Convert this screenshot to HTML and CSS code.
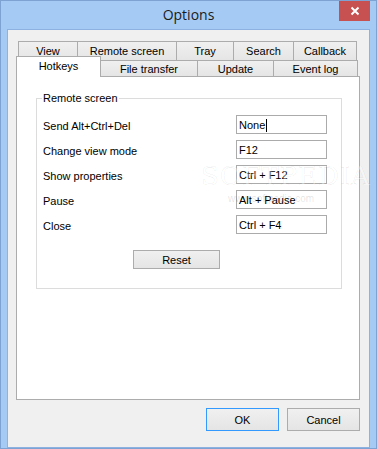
FILE: index.html
```html
<!DOCTYPE html>
<html lang="en">
  <head>
    <meta charset="UTF-8" />
    <title>Options</title>
    <link rel="stylesheet" href="styles.css">
  </head>

  <body>
    <div class="window">
      <div class="titlebar">
        <div class="title">Options</div>
        <div class="close">
          <svg width="10" height="10" viewBox="0 0 10 10">
            <path d="M1.5 1.5 L8.5 8.5 M8.5 1.5 L1.5 8.5" stroke="#fff" stroke-width="2" />
          </svg>
        </div>
      </div>

      <div class="client">
        <div class="tabs">
          <div class="tab-row tab-row-back">
            <div class="tab tab-view">View</div>
            <div class="tab tab-remote">Remote screen</div>
            <div class="tab tab-tray">Tray</div>
            <div class="tab tab-search">Search</div>
            <div class="tab tab-callback">Callback</div>
          </div>
          <div class="tab-row tab-row-front">
            <div class="tab tab-active tab-hotkeys">Hotkeys</div>
            <div class="tab tab-transfer">File transfer</div>
            <div class="tab tab-update">Update</div>
            <div class="tab tab-eventlog">Event log</div>
          </div>
        </div>

        <div class="panel">
          <fieldset class="group">
            <legend>Remote screen</legend>
            <div class="hotkeys">
              <div class="hk-label">Send Alt+Ctrl+Del</div>
              <div class="hk-input">None<span class="caret"></span></div>
              <div class="hk-label">Change view mode</div>
              <div class="hk-input">F12</div>
              <div class="hk-label">Show properties</div>
              <div class="hk-input">Ctrl + F12</div>
              <div class="hk-label">Pause</div>
              <div class="hk-input">Alt + Pause</div>
              <div class="hk-label">Close</div>
              <div class="hk-input">Ctrl + F4</div>
            </div>
            <button class="btn btn-reset">Reset</button>
          </fieldset>
          <!-- faint watermark over the page -->
          <div class="watermark">
            <div class="wm-big">SOFTPEDIA</div>
            <div class="wm-small">www.softpedia.com</div>
          </div>
        </div>

        <div class="actions">
          <button class="btn btn-default">OK</button>
          <button class="btn">Cancel</button>
        </div>
      </div>
    </div>
  </body>
</html>
```

FILE: styles.css
```css
/* Windows 8 style dialog */
body {
  margin: 0;
  padding: 0;
  font-family: "Liberation Sans", Arial, sans-serif;
  font-size: 11px;
  color: #000;
}

.window {
  box-sizing: border-box;
  width: 377px;
  height: 449px;
  border: 1px solid #7ea3d3;
  background: #a5cbf5;
  display: flex;
  flex-direction: column;
}

.titlebar {
  height: 29px;
  display: grid;
  grid-template-columns: 37px 1fr 37px;
}

.title {
  grid-column: 2;
  text-align: center;
  font-family: "Open Sans", sans-serif;
  font-size: 14px;
  line-height: 20px;
  padding-top: 4px;
  color: #1b1b1b;
}

.close {
  grid-column: 3;
  justify-self: end;
  width: 31px;
  height: 20px;
  margin-right: 6px;
  background: #c75050;
  display: flex;
  align-items: center;
  justify-content: center;
}

.client {
  height: 410px;
  margin: 0 6px;
  border: 1px solid #8db2e1;
  background: #f0f0f0;
  padding: 11px 9px 9px 8px;
  display: flex;
  flex-direction: column;
}

/* tabs */
.tab-row {
  display: flex;
}

.tab-row-back {
  height: 19px;
  padding-left: 2px;
}

.tab-row-front {
  height: 16px;
  align-items: flex-end;
}

.tab {
  box-sizing: border-box;
  border: 1px solid #acacac;
  border-bottom: 0;
  background: linear-gradient(#f0f0f0, #e5e5e5);
  text-align: center;
  margin-left: -1px;
  white-space: nowrap;
}

.tab-row-back .tab {
  height: 19px;
  line-height: 18px;
}

.tab-row-front .tab {
  height: 16px;
  line-height: 16px;
}

.tab-row .tab:first-child {
  margin-left: 0;
}

.tab-row-front .tab-active {
  position: relative;
  z-index: 2;
  height: 21px;
  line-height: 18px;
  margin-bottom: -1px;
  background: #fff;
}

.tab-view { width: 60px; }
.tab-remote { width: 100px; }
.tab-tray { width: 58px; }
.tab-search { width: 61px; }
.tab-callback { width: 64px; }
.tab-hotkeys { width: 85px; }
.tab-transfer { width: 98px; }
.tab-update { width: 77px; }
.tab-eventlog { width: 85px; }

/* page */
.panel {
  position: relative;
  box-sizing: border-box;
  height: 324px;
  border: 1px solid #acacac;
  background: #fff;
}

.group {
  margin: 15px 17px 0 19px;
  padding: 11px 14px 19px 5px;
  border: 1px solid #dcdcdc;
  min-width: 0;
}

.group legend {
  padding: 0 1px;
  line-height: 12px;
}

.hotkeys {
  display: grid;
  grid-template-columns: 1fr 91px;
  grid-auto-rows: 19px;
  row-gap: 6px;
  align-items: center;
}

.hk-label {
  padding-left: 1px;
  padding-top: 3px;
}

.hk-input {
  box-sizing: border-box;
  height: 19px;
  border: 1px solid #ababab;
  padding-left: 2px;
  padding-top: 1px;
  line-height: 17px;
  display: flex;
  align-items: center;
}

.caret {
  display: inline-block;
  width: 1px;
  height: 13px;
  margin-left: 1px;
  background: #000;
}

.watermark {
  position: absolute;
  left: 184px;
  top: 86px;
  width: 140px;
  text-align: center;
  pointer-events: none;
}

.wm-big {
  font-family: "DejaVu Serif", serif;
  font-size: 26px;
  letter-spacing: 1px;
  line-height: 26px;
  color: rgba(255, 255, 255, 0.35);
  -webkit-text-stroke: 0.6px rgba(0, 0, 0, 0.08);
}

.wm-small {
  margin-top: 4px;
  font-size: 10px;
  color: rgba(0, 0, 0, 0.12);
}

/* buttons */
.btn {
  box-sizing: border-box;
  border: 1px solid #acacac;
  background: linear-gradient(#f0f0f0, #e5e5e5);
  font-family: "Liberation Sans", Arial, sans-serif;
  font-size: 11px;
  color: #000;
  padding: 0;
}

.btn-reset {
  display: block;
  width: 87px;
  height: 19px;
  margin: 16px 0 0 91px;
}

.actions {
  display: flex;
  justify-content: flex-end;
  gap: 8px;
  margin-top: 8px;
}

.actions .btn {
  width: 73px;
  height: 23px;
}

.btn-default {
  border-color: #3399ff;
}
```
